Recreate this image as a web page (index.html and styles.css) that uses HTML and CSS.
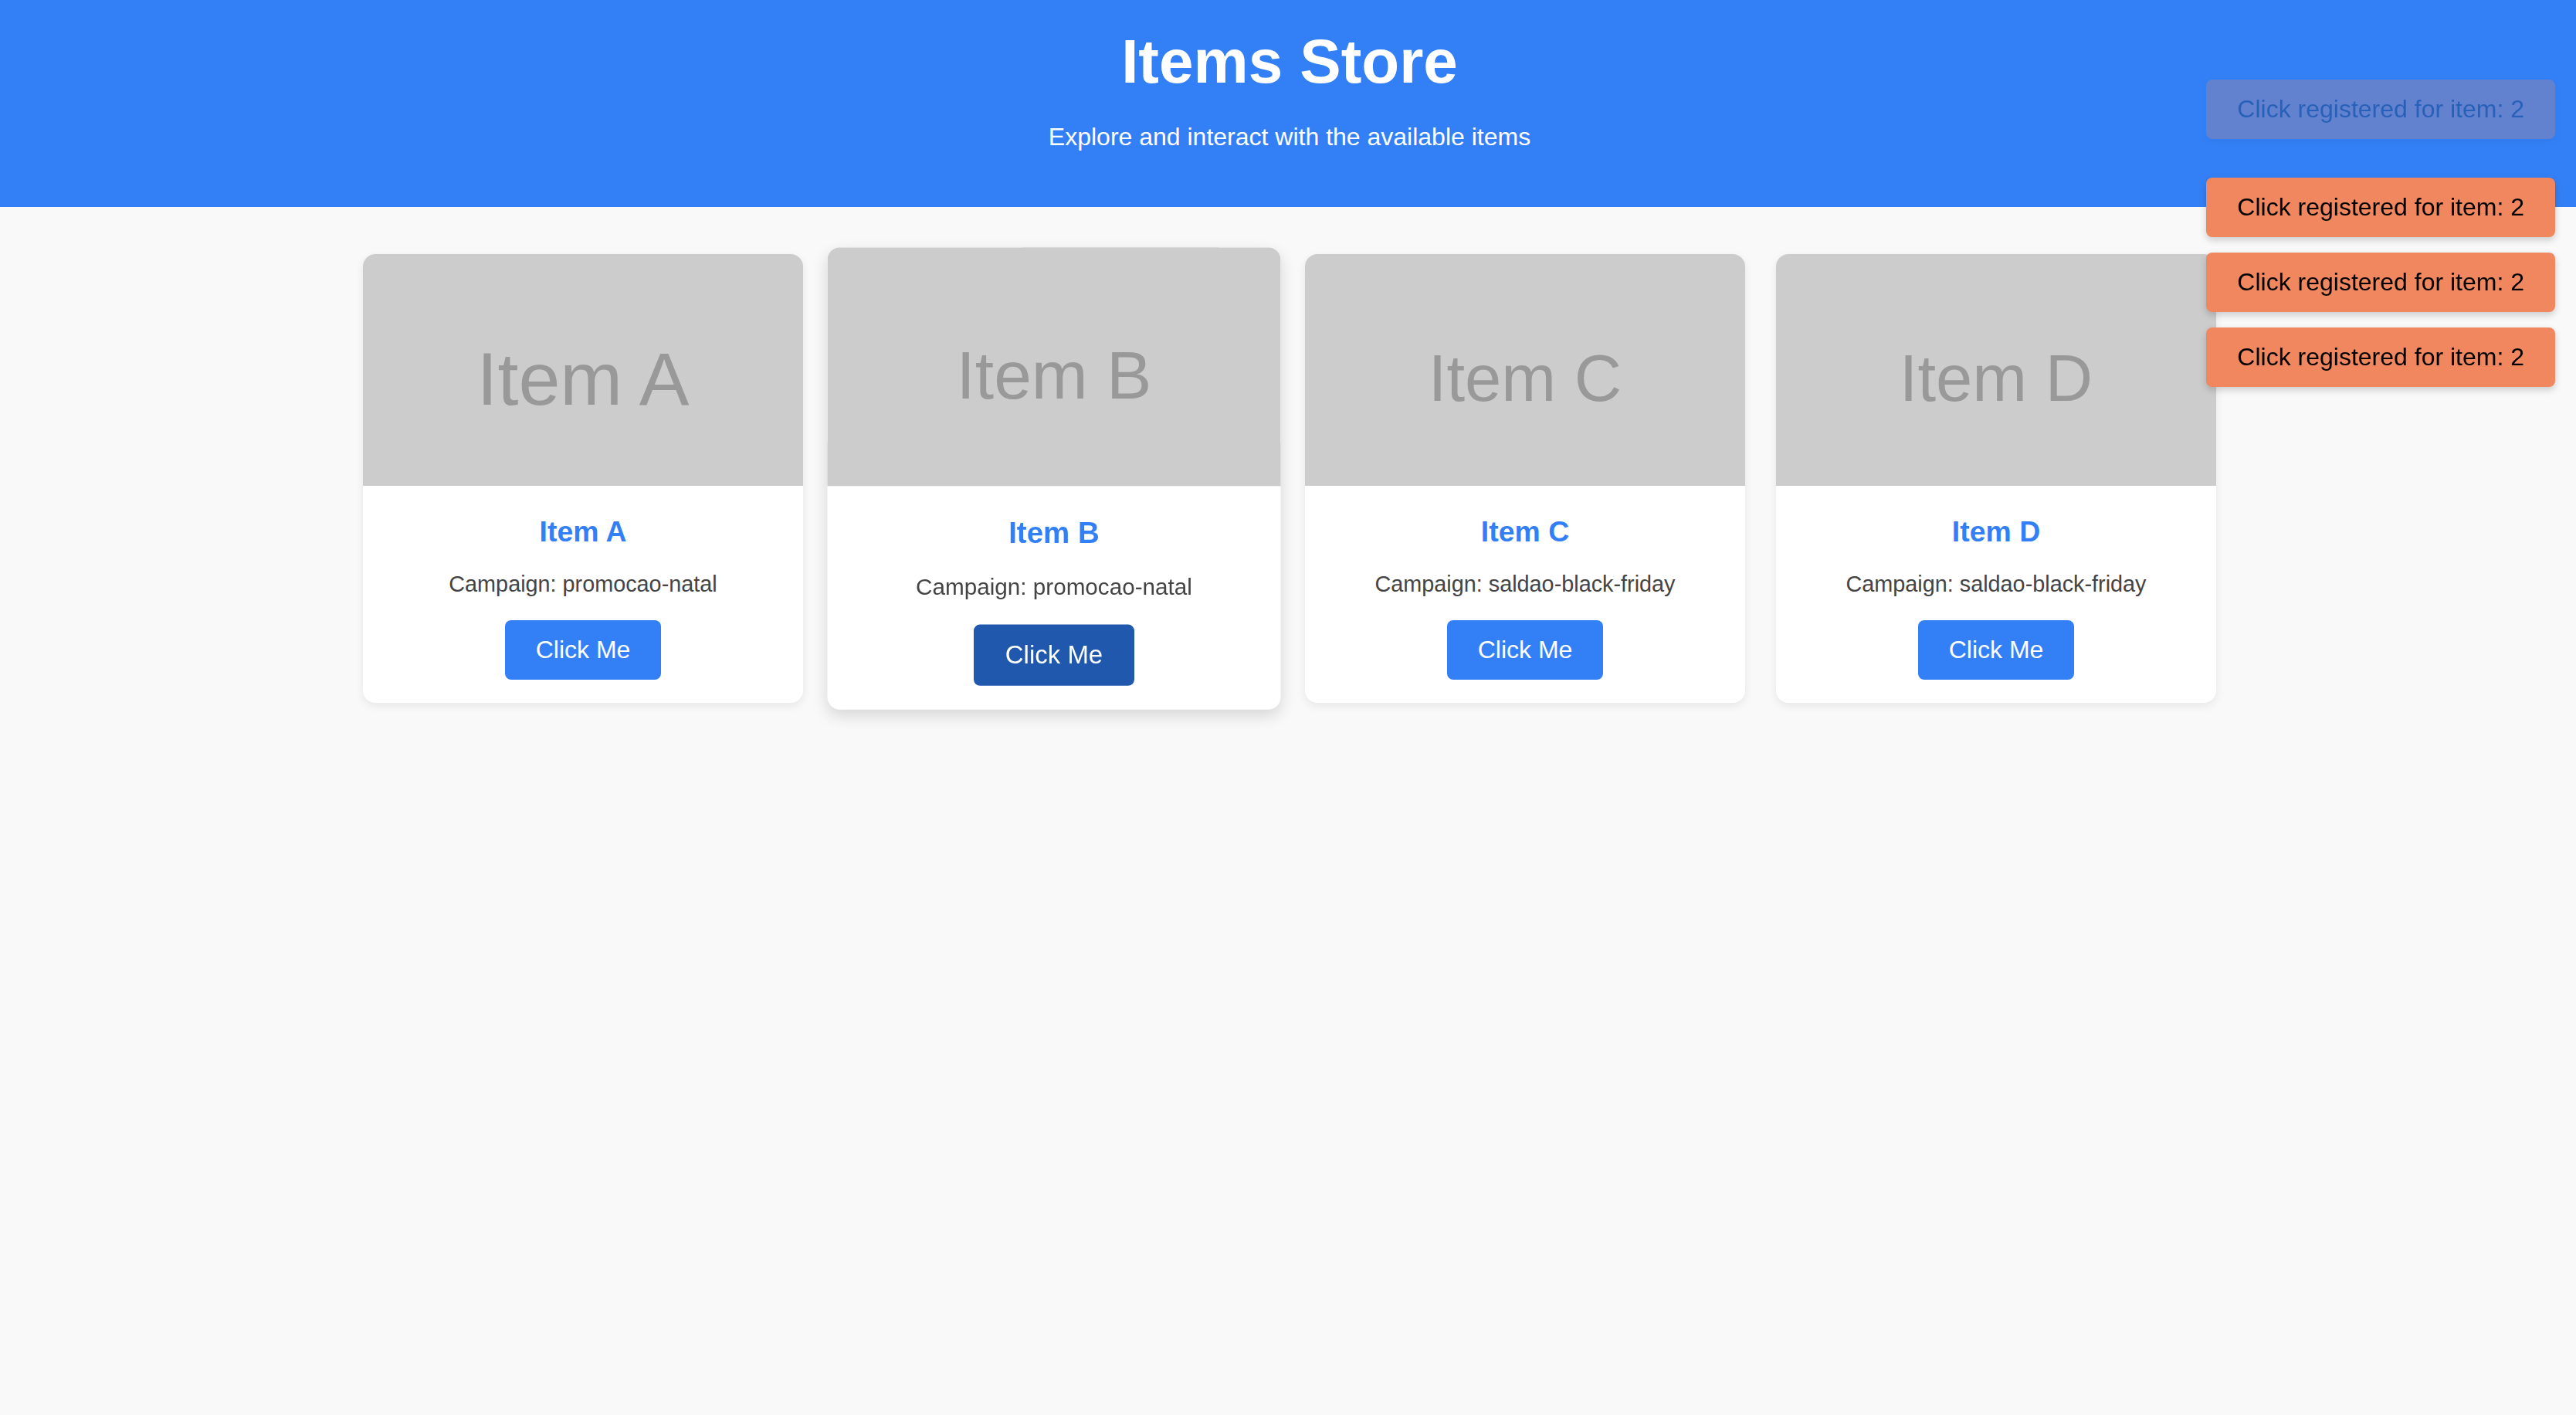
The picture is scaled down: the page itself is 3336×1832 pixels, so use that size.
FILE: index.html
```html
<!DOCTYPE html>
<html lang="en">
<head>
<meta charset="utf-8">
<title>Items Store</title>
<link rel="stylesheet" href="styles.css">
</head>
<body>
<header class="site-header">
  <h1 class="site-title">Items Store</h1>
  <p class="site-subtitle">Explore and interact with the available items</p>
</header>

<main class="store">
  <div class="grid">
    <div class="card">
      <div class="thumb thumb-large">Item A</div>
      <div class="card-body">
        <h3 class="card-title">Item A</h3>
        <p class="campaign">Campaign: promocao-natal</p>
        <button class="btn">Click Me</button>
      </div>
    </div>
    <div class="card card-hover">
      <div class="thumb">Item B</div>
      <div class="card-body">
        <h3 class="card-title">Item B</h3>
        <p class="campaign">Campaign: promocao-natal</p>
        <button class="btn btn-active">Click Me</button>
      </div>
    </div>
    <div class="card">
      <div class="thumb">Item C</div>
      <div class="card-body">
        <h3 class="card-title">Item C</h3>
        <p class="campaign">Campaign: saldao-black-friday</p>
        <button class="btn">Click Me</button>
      </div>
    </div>
    <div class="card">
      <div class="thumb">Item D</div>
      <div class="card-body">
        <h3 class="card-title">Item D</h3>
        <p class="campaign">Campaign: saldao-black-friday</p>
        <button class="btn">Click Me</button>
      </div>
    </div>
  </div>
</main>

<div class="toasts">
  <div class="toast toast-leaving">Click registered for item: 2</div>
  <div class="toast">Click registered for item: 2</div>
  <div class="toast">Click registered for item: 2</div>
  <div class="toast">Click registered for item: 2</div>
</div>
</body>
</html>
```

FILE: styles.css
```css
* {
  box-sizing: border-box;
}

html, body {
  margin: 0;
  padding: 0;
}

body {
  background: #f9f9f9;
  font-family: "Liberation Sans", Arial, Helvetica, sans-serif;
  color: #333;
  min-height: 1832px;
}

.site-header {
  background: #3380f6;
  color: #ffffff;
  text-align: center;
  padding: 34px 0 72px 4px;
}

.site-title {
  margin: 0;
  font-size: 80px;
  line-height: 92px;
  font-weight: 700;
}

.site-subtitle {
  margin: 33px 0 0;
  font-size: 32px;
  line-height: 37px;
}

.store {
  padding: 61px 0 0 4px;
}

.grid {
  width: 2400px;
  margin: 0 auto;
  display: flex;
  gap: 40px;
  align-items: flex-start;
}

.card {
  width: 570px;
  background: #ffffff;
  border-radius: 16px;
  overflow: hidden;
  box-shadow: 0 4px 12px rgba(0, 0, 0, 0.08);
  text-align: center;
}

.card-hover {
  transform: scale(1.03);
  box-shadow: 0 8px 20px rgba(0, 0, 0, 0.14);
}

.thumb {
  height: 300px;
  background: #cccccc;
  color: #999999;
  display: flex;
  align-items: center;
  justify-content: center;
  padding-top: 20px;
  font-size: 85px;
  line-height: 1;
  filter: blur(0.6px);
}

.thumb-large {
  font-size: 97px;
  padding-top: 22px;
}

.card-body {
  padding: 38px 30px 30px;
}

.card-title {
  margin: 0 0 30px;
  color: #3380f6;
  font-size: 37.4px;
  line-height: 43px;
  font-weight: 700;
}

.campaign {
  margin: 0 0 30px;
  color: #444444;
  font-size: 28.8px;
  line-height: 33px;
}

.btn {
  display: inline-block;
  background: #3380f6;
  color: #ffffff;
  border: none;
  border-radius: 8px;
  padding: 20px 40px;
  font-family: inherit;
  font-size: 32px;
  line-height: 37px;
  cursor: pointer;
}

.btn-active {
  background: #2058ae;
}

.toasts {
  position: fixed;
  top: 133px;
  right: 27px;
  display: flex;
  flex-direction: column;
  gap: 20px;
  align-items: flex-end;
}

.toast {
  background: #f0875e;
  color: #000000;
  font-size: 32px;
  line-height: 37px;
  padding: 20px 40px;
  border-radius: 8px;
  box-shadow: 0 4px 10px rgba(0, 0, 0, 0.18);
  white-space: nowrap;
}

.toast-leaving {
  opacity: 0.25;
  transform: translateY(-30px);
}
```
